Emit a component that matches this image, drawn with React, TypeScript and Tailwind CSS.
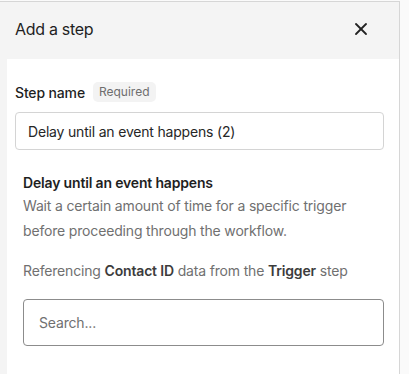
import { X } from "lucide-react";

export default function App() {
  return (
    <div
      className="flex h-[374px] w-[409px] overflow-hidden bg-[#fafafa] pt-px"
      style={{ fontFamily: "Inter, 'Noto Sans', sans-serif" }}
    >
      <div className="flex w-[400px] flex-col border-t border-r border-[#d6d6d6] bg-[#f4f4f4]">
        <div className="flex h-[57px] items-center justify-between pb-[4px] pl-[15px] pr-[28px]">
          <span className="text-[16px] tracking-[-0.3px] text-[#1f1f1f]">Add a step</span>
          <X className="h-[20px] w-[20px] text-[#222]" strokeWidth={2.2} />
        </div>
        <div className="ml-[7px] flex-1 bg-white pr-[15px] pl-[8px] pt-[23px]">
          <div className="flex h-[20px] items-center gap-[8px]">
            <span className="text-[14px] font-medium tracking-[-0.15px] text-[#1f1f1f]">Step name</span>
            <span className="rounded-[5px] bg-[#f3f3f3] px-[6px] py-[1px] text-[12px] text-[#6e6e6e]">
              Required
            </span>
          </div>
          <div className="mt-[10px] flex h-[38px] items-center rounded-[4px] border border-[#d4d4d4] px-[12px] text-[14px] tracking-[-0.19px] text-[#262626]">
            Delay until an event happens (2)
          </div>
          <div className="pl-[8px] tracking-[-0.17px]">
            <div className="mt-[23px] text-[14px] leading-[20px] font-semibold text-[#1f1f1f]">
              Delay until an event happens
            </div>
            <p className="mt-0 text-[14px] leading-[25px] text-[#707070]">
              Wait a certain amount of time for a specific trigger before proceeding through the workflow.
            </p>
            <p className="mt-[15px] text-[14px] leading-[25px] text-[#707070]">
              Referencing <span className="font-semibold text-[#3c3c3c]">Contact ID</span> data from the{" "}
              <span className="font-semibold text-[#3c3c3c]">Trigger</span> step
            </p>
            <div className="mt-[16px] flex h-[47px] items-center rounded-[4px] border border-[#8c8c8c] px-[15px] text-[14px] text-[#707070]">
              Search...
            </div>
          </div>
        </div>
      </div>
    </div>
  );
}
